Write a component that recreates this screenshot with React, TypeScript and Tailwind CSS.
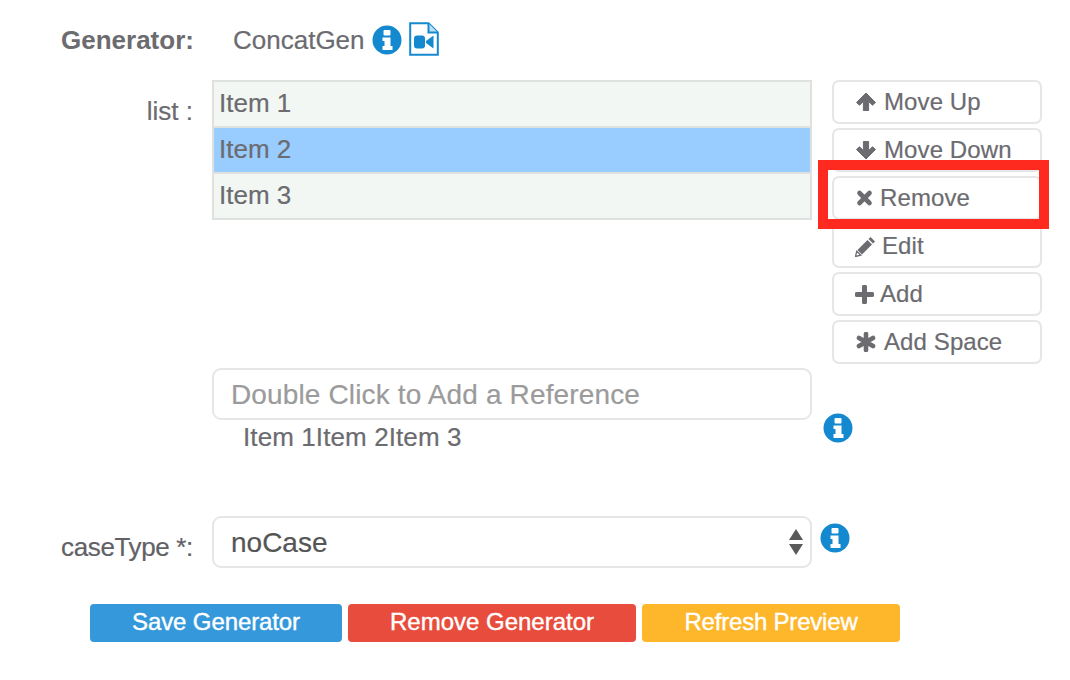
import type { ReactNode } from 'react';

const SideButton = ({ icon, label, gap }: { icon: ReactNode; label: string; gap: string }) => (
  <button className={`flex h-[44px] w-[210px] items-center rounded-[7px] border-2 border-[#e6e6e6] bg-white pl-[21px] text-[24px] tracking-[0.1px] text-[#6b6b70] [-webkit-text-stroke:0.2px] ${gap}`}>
    {icon}
    <span>{label}</span>
  </button>
);

const InfoIcon = ({ className }: { className: string }) => (
  <svg width="30" height="30" viewBox="0 0 30 30" className={`shrink-0 ${className}`}>
    <circle cx="15" cy="15" r="14.5" fill="#1589d0" />
    <rect x="11.5" y="5" width="7" height="5.5" rx="1" fill="white" />
    <path d="M10.5 12.5H18.5V21H20.5V25H10.5V21H12.5V16H10.5Z" fill="white" />
  </svg>
);

const ArrowUp = ({ down }: { down?: boolean }) => (
  <svg width="22" height="20" viewBox="0 0 22 20" className={down ? 'rotate-180' : ''}>
    <path d="M11 1L20.5 10.5L17.5 13.2L13.6 9.4V18.5H8.4V9.4L4.5 13.2L1.5 10.5Z" fill="currentColor" stroke="currentColor" strokeLinejoin="round" strokeWidth="1" />
  </svg>
);

const CrossIcon = () => (
  <svg width="19" height="18" viewBox="0 0 19 18">
    <path d="M4.5 4L14.5 14M14.5 4L4.5 14" stroke="currentColor" strokeWidth="4.6" strokeLinecap="round" />
  </svg>
);

const PencilIcon = () => (
  <svg width="21" height="21" viewBox="0 0 21 21">
    <path d="M15.5 1L20 5.5L18 7.5L13.5 3Z" fill="currentColor" />
    <path d="M12.5 4L17 8.5L7 18.5L2.5 14Z" fill="currentColor" />
    <path d="M1.8 15.2L5.8 19.2L0.5 20.5Z" fill="none" stroke="currentColor" strokeWidth="1.3" />
  </svg>
);

const PlusIcon = () => (
  <svg width="19" height="19" viewBox="0 0 19 19">
    <path d="M9.5 2V17M2 9.5H17" stroke="currentColor" strokeWidth="5" strokeLinecap="round" />
  </svg>
);

const StarIcon = () => (
  <svg width="22" height="20" viewBox="0 0 22 20">
    <path d="M11 2V18M4 6L18 14M18 6L4 14" stroke="currentColor" strokeWidth="4.6" strokeLinecap="round" />
  </svg>
);

const VideoFile = () => (
  <svg width="30" height="34" viewBox="0 0 30 34" className="text-[#1589d0]">
    <path d="M1.2 1.2H19.5L28.8 10.5V32.8H1.2Z" fill="none" stroke="currentColor" strokeWidth="2" />
    <path d="M19.5 1.2V10.5H28.8" fill="#bfe0f3" stroke="currentColor" strokeWidth="2" />
    <rect x="5" y="13.5" width="11" height="13" rx="3" fill="currentColor" />
    <path d="M17 19L24.5 13.5V26.5L17 21Z" fill="currentColor" />
  </svg>
);

const App = () => {
  return (
    <div className="relative h-[680px] w-[1070px] overflow-hidden bg-white pt-[22px] font-['Liberation_Sans',Arial,sans-serif] text-[26px] text-[#6b6b70]">
      <div className="flex h-[36px] items-center">
        <div className="w-[193px] pl-[61px] font-bold leading-[36px]">Generator:</div>
        <div className="ml-[40px] leading-[36px] [-webkit-text-stroke:0.2px]">ConcatGen</div>
        <InfoIcon className="ml-[7px]" />
        <span className="ml-[7px] -mt-[3px]"><VideoFile /></span>
      </div>

      <div className="mt-[22px] flex">
        <div className="w-[193px] pt-[15px] text-right leading-[32px] [-webkit-text-stroke:0.2px]">list :</div>
        <div className="ml-[19px] h-[140px] w-[600px] border-2 border-[#dfe1df] bg-[#dfe1df] [-webkit-text-stroke:0.2px]">
          <div className="flex h-[44px] items-center bg-[#f3f7f3] pb-[2px] pl-[5px]">Item 1</div>
          <div className="mt-[2px] flex h-[44px] items-center bg-[#99ccff] pb-[2px] pl-[5px]">Item 2</div>
          <div className="mt-[2px] flex h-[44px] items-center bg-[#f3f7f3] pb-[2px] pl-[5px]">Item 3</div>
        </div>
        <div className="ml-[20px] flex flex-col gap-[4px]">
          <SideButton icon={<ArrowUp />} label="Move Up" gap="gap-[7px]" />
          <SideButton icon={<ArrowUp down />} label="Move Down" gap="gap-[7px]" />
          <SideButton icon={<CrossIcon />} label="Remove" gap="gap-[6px]" />
          <SideButton icon={<PencilIcon />} label="Edit" gap="gap-[6px]" />
          <SideButton icon={<PlusIcon />} label="Add" gap="gap-[6px]" />
          <SideButton icon={<StarIcon />} label="Add Space" gap="gap-[7px]" />
        </div>
      </div>

      <div className="mt-[4px] flex pl-[212px]">
        <div className="w-[600px]">
          <input
            readOnly
            placeholder="Double Click to Add a Reference"
            className="h-[52px] w-full rounded-[9px] border-2 border-[#e6e6e6] bg-white pl-[17px] pt-[1px] text-[28px] tracking-[0.14px] outline-none [-webkit-text-stroke:0.2px] placeholder:text-[#9b9b9b]"
          />
          <div className="mt-[1px] pl-[31px] leading-[32px] tracking-[0.1px] [-webkit-text-stroke:0.2px]">Item 1Item 2Item 3</div>
        </div>
        <InfoIcon className="ml-[11px] mt-[45px]" />
      </div>

      <div className="mt-[63px] flex items-start">
        <div className="w-[193px] pt-[15px] text-right leading-[32px] tracking-[-0.35px] text-[#616166] [-webkit-text-stroke:0.2px]">caseType *:</div>
        <div className="relative ml-[19px] flex h-[52px] w-[600px] items-center rounded-[9px] border-2 border-[#e6e6e6] bg-white pl-[17px] pt-[2px] text-[28px] text-[#555555] [-webkit-text-stroke:0.2px]">
          noCase
          <svg width="14" height="26" viewBox="0 0 14 26" className="absolute right-[7px] top-[11px] text-[#5a5a5a]">
            <path d="M7 0L14 11H0Z" fill="currentColor" />
            <path d="M7 26L14 15H0Z" fill="currentColor" />
          </svg>
        </div>
        <InfoIcon className="ml-[8px] mt-[7px]" />
      </div>

      <div className="mt-[36px] flex gap-[6px] pl-[90px] text-[24px] text-white [-webkit-text-stroke:0.4px]">
        <button className="h-[38px] w-[252px] rounded-[4px] bg-[#3498db] pb-[2px] tracking-[-0.1px]">Save Generator</button>
        <button className="h-[38px] w-[288px] rounded-[4px] bg-[#e74c3c] pb-[2px]">Remove Generator</button>
        <button className="h-[38px] w-[258px] rounded-[4px] bg-[#feb62b] pb-[2px] tracking-[-0.2px]">Refresh Preview</button>
      </div>

      {/* red highlight from the annotated screenshot */}
      <div className="absolute left-[818px] top-[160px] h-[69px] w-[231px] border-[10px] border-[#ff2a1f]" />
    </div>
  );
};

export default App;
